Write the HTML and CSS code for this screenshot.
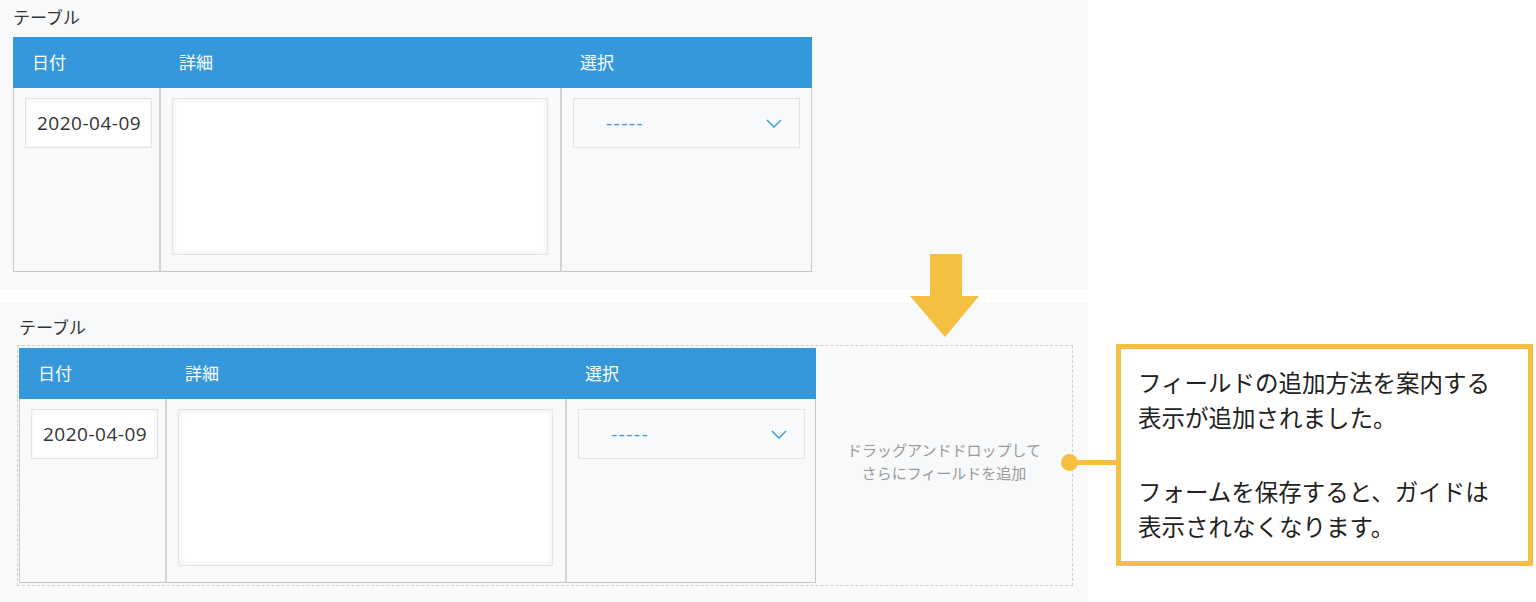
FILE: index.html
```html
<!DOCTYPE html>
<html lang="ja">
<head>
  <meta charset="UTF-8">
  <title>テーブル</title>
  <link rel="stylesheet" href="styles.css">
</head>
<body>
  <div class="page">
    <!-- 変更前 -->
    <section class="panel panel-top">
      <div class="label">テーブル</div>
      <div class="table table-top">
        <div class="th">日付</div>
        <div class="th">詳細</div>
        <div class="th">選択</div>
        <div class="td"><div class="date-input">2020-04-09</div></div>
        <div class="td"><div class="textarea"></div></div>
        <div class="td td-last">
          <div class="select">
            <span>-----</span>
            <svg class="chevron" width="16" height="9" viewBox="0 0 16 9"><path d="M1 1 L8 8 L15 1" fill="none" stroke="#3498db" stroke-width="1.4"/></svg>
          </div>
        </div>
      </div>
    </section>

    <!-- 変更後 -->
    <div class="row">
      <section class="panel panel-bottom">
        <div class="label">テーブル</div>
        <div class="drop">
          <div class="table table-bottom">
            <div class="th">日付</div>
            <div class="th">詳細</div>
            <div class="th">選択</div>
            <div class="td"><div class="date-input">2020-04-09</div></div>
            <div class="td"><div class="textarea"></div></div>
            <div class="td td-last">
              <div class="select">
                <span>-----</span>
                <svg class="chevron" width="16" height="9" viewBox="0 0 16 9"><path d="M1 1 L8 8 L15 1" fill="none" stroke="#3498db" stroke-width="1.4"/></svg>
              </div>
            </div>
          </div>
          <div class="guide">ドラッグアンドドロップして<br>さらにフィールドを追加</div>
        </div>
      </section>

      <aside class="callout">
        <span class="connector"><span class="dot"></span></span>
        <p>フィールドの追加方法を案内する<br>表示が追加されました。</p>
        <p>フォームを保存すると、ガイドは<br>表示されなくなります。</p>
      </aside>
    </div>

    <!-- 矢印 -->
    <svg class="arrow" width="70" height="83" viewBox="0 0 70 83">
      <polygon points="20,0 52,0 52,42 69,42 35,83 0,42 20,42" fill="#f5bf42"/>
    </svg>
  </div>
</body>
</html>
```

FILE: styles.css
```css
body {
  margin: 0;
  background: #ffffff;
  font-family: "Open Sans", "Noto Sans CJK JP", sans-serif;
  color: #333333;
}

.page {
  position: relative;
  width: 1536px;
  height: 602px;
  overflow: hidden;
}

.panel {
  background-color: #f7f9fa;
  width: 1088px;
  box-sizing: border-box;
}

.panel-top {
  height: 289px;
  padding: 6px 0 0 13px;
  margin-bottom: 14px;
}

.panel-bottom {
  height: 299px;
  padding: 13px 0 0 17px;
}

.label {
  font-size: 17px;
  line-height: 24px;
  color: #333;
  margin-bottom: 7px;
}

.panel-bottom .label {
  margin-bottom: 5px;
  padding-left: 2px;
}

/* テーブル */
.table {
  display: grid;
  grid-template-rows: 51px 184px;
}

.table-top {
  width: 799px;
  grid-template-columns: 148px 401px 250px;
}

.table-bottom {
  width: 797px;
  grid-template-columns: 148px 400px 249px;
}

.th {
  background-color: #3498db;
  color: #ffffff;
  font-size: 17px;
  line-height: 51px;
  padding-left: 18px;
}

.th:first-child {
  padding-left: 19px;
}

.td {
  box-sizing: border-box;
  padding: 10px 0 0 11px;
  border-right: 2px solid #d4d4d4;
  border-bottom: 1px solid #c8c8c8;
}

.td:nth-child(4) {
  border-left: 1px solid #c8c8c8;
}

.td-last {
  border-right: 1px solid #c8c8c8;
}

.date-input {
  width: 127px;
  height: 50px;
  box-sizing: border-box;
  background: #ffffff;
  border: 1px solid #e3e4e6;
  box-shadow: inset 0 0 4px rgba(0, 0, 0, 0.06);
  font-size: 19px;
  letter-spacing: 0.5px;
  line-height: 48px;
  padding-left: 11px;
  color: #333;
}

.textarea {
  width: 376px;
  height: 157px;
  box-sizing: border-box;
  background: #ffffff;
  border: 1px solid #e3e4e6;
  box-shadow: inset 0 0 6px rgba(0, 0, 0, 0.08);
}

.table-bottom .textarea {
  width: 375px;
}

.select {
  width: 227px;
  height: 50px;
  box-sizing: border-box;
  border: 1px solid #e3e4e6;
  background: #f7f9fa;
  display: flex;
  align-items: center;
  justify-content: space-between;
  padding: 0 17px 0 32px;
  color: #3498db;
  font-size: 19px;
  letter-spacing: 1.5px;
}

.chevron {
  display: block;
}

/* ドロップ領域 */
.drop {
  display: flex;
  width: 1056px;
  height: 241px;
  box-sizing: border-box;
  border: 1px dashed #cfcfcf;
  padding: 2px 0 0 1px;
}

.guide {
  flex: 1;
  display: flex;
  align-items: center;
  justify-content: center;
  text-align: center;
  font-size: 15px;
  line-height: 23px;
  color: #9a9a9a;
  padding-bottom: 10px;
}

/* 吹き出し */
.row {
  display: flex;
  align-items: flex-start;
}

.callout {
  position: relative;
  margin: 41px 0 0 28px;
  width: 417px;
  box-sizing: border-box;
  border: 5px solid #f5bf42;
  background: #ffffff;
  padding: 16px 10px 17px 17px;
  font-family: "Noto Sans CJK JP", sans-serif;
  font-size: 23.5px;
  line-height: 35px;
  color: #222;
}

.callout p {
  margin: 0;
}

.callout p + p {
  margin-top: 39px;
}

.connector {
  position: absolute;
  left: -52px;
  top: 111px;
  width: 52px;
  height: 5px;
  background: #f5bf42;
}

.dot {
  position: absolute;
  left: -8px;
  top: -6px;
  width: 17px;
  height: 17px;
  border-radius: 50%;
  background: #f5bf42;
}

.arrow {
  position: absolute;
  left: 910px;
  top: 254px;
}
```
